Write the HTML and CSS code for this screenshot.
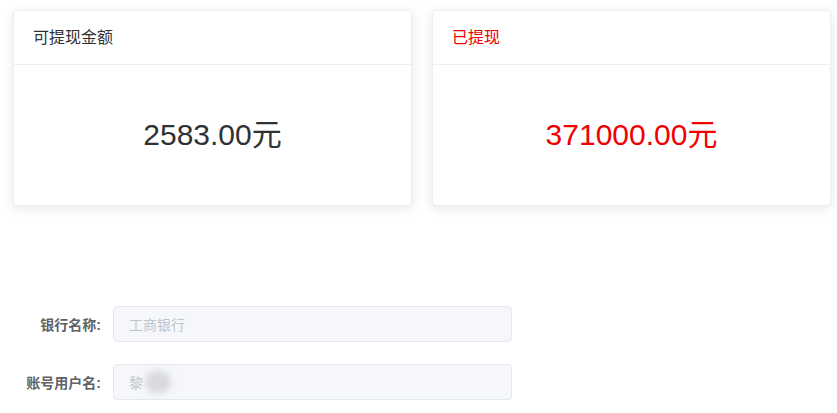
FILE: index.html
```html
<!DOCTYPE html>
<html lang="zh-CN">
<head>
<meta charset="utf-8">
<title>提现</title>
<link rel="stylesheet" href="styles.css">
</head>
<body>
<div class="page">
  <div class="cards">
    <div class="card">
      <div class="card-header">可提现金额</div>
      <div class="card-body">2583.00元</div>
    </div>
    <div class="card card-red">
      <div class="card-header">已提现</div>
      <div class="card-body">371000.00元</div>
    </div>
  </div>
  <form class="form">
    <div class="form-item">
      <label class="form-label">银行名称:</label>
      <div class="input"><span class="placeholder">工商银行</span></div>
    </div>
    <div class="form-item">
      <label class="form-label">账号用户名:</label>
      <div class="input"><span class="placeholder">黎</span><span class="blur"></span></div>
    </div>
  </form>
</div>
</body>
</html>
```
FILE: styles.css
```css
* { box-sizing: border-box; }
html, body { margin: 0; padding: 0; background: #fff; }
body {
  font-family: "Liberation Sans", Arial, "Noto Sans CJK SC", sans-serif;
  color: #303133;
  overflow: hidden;
}
.page {
  padding: 10px 6px 0 13px;
}
.cards {
  display: grid;
  grid-template-columns: 399px 399px;
  column-gap: 20px;
}
.card {
  background: #fff;
  border: 1px solid #ebeef5;
  border-radius: 4px;
  box-shadow: 0 2px 12px 0 rgba(0, 0, 0, 0.1);
  overflow: hidden;
  height: 196px;
}
.card-header {
  padding: 18px 19px 17px;
  font-size: 16px;
  line-height: 18px;
  color: #303133;
  border-bottom: 1px solid #ebeef5;
}
.card-body {
  height: 141px;
  display: flex;
  align-items: center;
  justify-content: center;
  font-size: 30px;
  color: #303133;
  padding-bottom: 8px;
}
.card-red .card-header,
.card-red .card-body {
  color: #f00000;
}
.form {
  margin-top: 100px;
  display: flex;
  flex-direction: column;
  gap: 22px;
}
.form-item {
  display: flex;
  align-items: center;
  height: 36px;
}
.form-label {
  width: 100px;
  padding-right: 12px;
  text-align: right;
  font-size: 14px;
  font-weight: 700;
  color: #606266;
}
.input {
  width: 399px;
  height: 36px;
  background: #f5f7fa;
  border: 1px solid #e4e7ed;
  border-radius: 4px;
  padding: 0 15px;
  display: flex;
  align-items: center;
  font-size: 14px;
}
.placeholder { color: #c0c4cc; }
.blur {
  display: inline-block;
  width: 26px;
  height: 22px;
  margin-left: 2px;
  background: #d9dadd;
  border-radius: 11px;
  filter: blur(3px);
}
```
